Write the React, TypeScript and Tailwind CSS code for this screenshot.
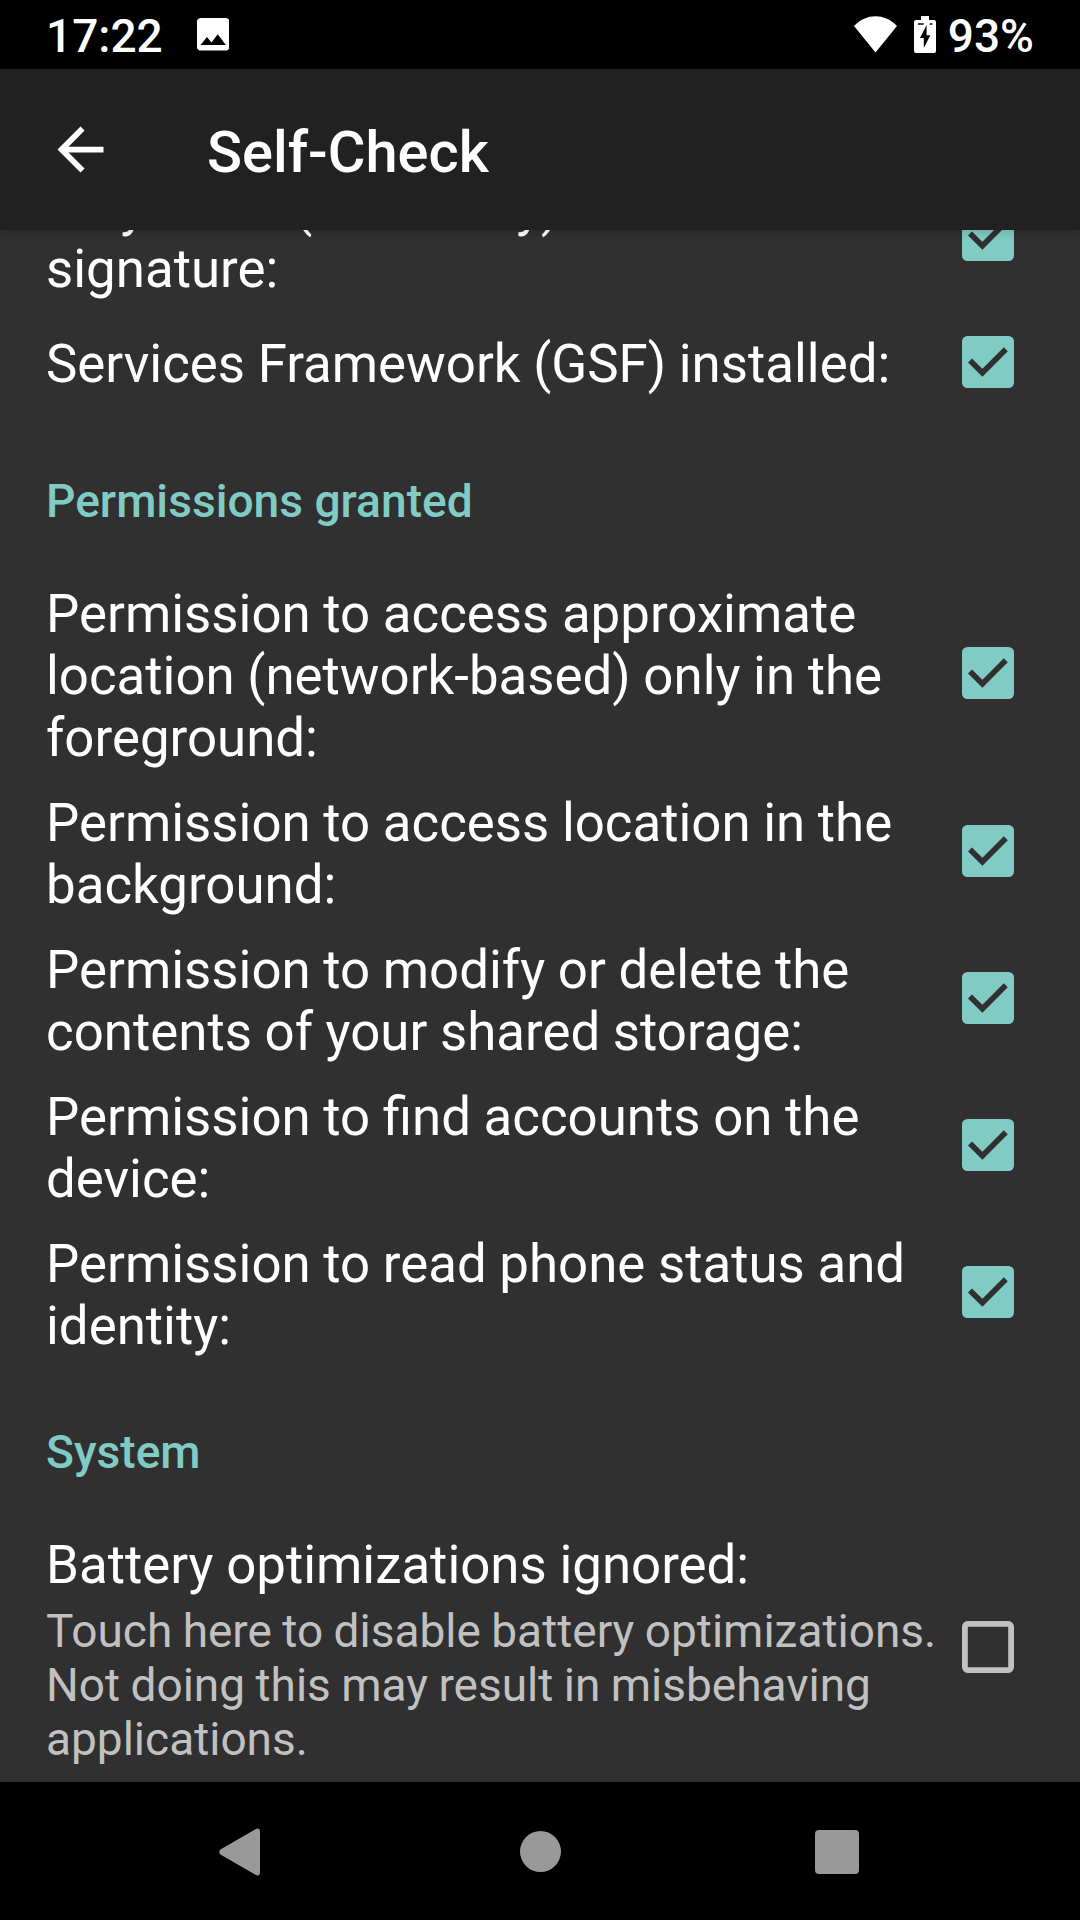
import type { ReactNode } from "react";

function Checkbox({ checked, className }: { checked: boolean; className: string }) {
  return (
    <svg viewBox="0 0 52 52" className={`h-[52px] w-[52px] shrink-0 ${className}`}>
      {checked ? (
        <>
          <rect width="52" height="52" rx="5.5" fill="#80cbc4" />
          <path d="M8 24.5 L20.4 36.8 L43.8 13.2" fill="none" stroke="#303030" strokeWidth="5.6" />
        </>
      ) : (
        <rect x="2.9" y="2.9" width="46.2" height="46.2" rx="2.8" fill="none" stroke="#c1c1c1" strokeWidth="5.8" />
      )}
    </svg>
  );
}

function CheckRow({
  title,
  summary,
  checked = true,
  padding = "pt-[14px] pb-[9px]",
  box = "mb-[6px]",
}: {
  title: string;
  summary?: string;
  checked?: boolean;
  padding?: string;
  box?: string;
}) {
  return (
    <div className={`flex items-center justify-between pr-[66px] pl-[46px] ${padding}`}>
      <div className="w-[900px]">
        <div className="text-[52.82px] leading-[62px] [word-spacing:-0.5px] text-white">{title}</div>
        {summary && (
          <div className="mt-2 text-[46px] leading-[54px] [word-spacing:-1px] text-[#c1c1c1]">{summary}</div>
        )}
      </div>
      <Checkbox checked={checked} className={box} />
    </div>
  );
}

function SectionHeader({ children }: { children: ReactNode }) {
  return (
    <h2 className="px-[46px] pt-[59px] pb-[41px] text-[46.15px] leading-[54px] font-medium text-[#80cbc4]">
      {children}
    </h2>
  );
}

function StatusBar() {
  return (
    <div className="flex h-[69px] shrink-0 items-start bg-black pr-[46px] pl-[46px] text-[46px] leading-[54px] font-medium text-white">
      <span className="mt-[9px]">17:22</span>
      <svg viewBox="3 3 18 18" className="mt-[18px] ml-[34px] h-[32.5px] w-[32.5px]" fill="#fff">
        <path d="M21 19V5c0-1.1-.9-2-2-2H5c-1.1 0-2 .9-2 2v14c0 1.1.9 2 2 2h14c1.1 0 2-.9 2-2zM8.5 13.5l2.5 3.01L14.5 12l4.5 6H5l3.5-4.5z" />
      </svg>
      <div className="ml-auto flex items-start">
        <svg viewBox="0 0 43 37" className="mt-4 h-[37px] w-[43px]" fill="#fff">
          <path d="M0 10 C6.2 3.6 13.6 0.3 21.5 0.3 C29.4 0.3 36.8 3.6 43 10 L21.5 36.4 Z" />
        </svg>
        <svg viewBox="0 0 22 37" className="mt-4 ml-[17px] h-[37px] w-[22px]">
          <path d="M7 0 H15 V4 H20 Q22 4 22 6 V35 Q22 37 20 37 H2 Q0 37 0 35 V6 Q0 4 2 4 H7 Z" fill="#fff" />
          <path d="M12.6 9 V19.3 H16.3 L9.8 32 V22 H6 Z M4 7.3 H9.7 V8.8 H4 Z M15.8 7.3 H18.4 V8.8 H15.8 Z" fill="#000" />
        </svg>
        <span className="mt-[9px] ml-[12px]">93%</span>
      </div>
    </div>
  );
}

function AppBar() {
  return (
    <header className="relative z-10 flex h-[161px] shrink-0 items-center bg-[#212121] pl-[46px] shadow-[0_3px_8px_rgba(0,0,0,0.14)]">
      <svg viewBox="0 0 24 24" className="h-[69px] w-[69px]" fill="#fff">
        <path d="M20 11H7.83l5.59-5.59L12 4l-8 8 8 8 1.41-1.41L7.83 13H20v-2z" />
      </svg>
      <h1 className="mt-[5px] ml-[92px] text-[57.8px] leading-[68px] font-medium text-white">Self-Check</h1>
    </header>
  );
}

function NavBar() {
  return (
    <nav className="flex h-[138px] shrink-0 items-center justify-between bg-black pt-px pr-[221px] pl-[219px]">
      <svg viewBox="0 0 41 48" className="h-[48px] w-[41px]" fill="#999">
        <path d="M1.4 21.6 L36.5 1.2 Q41 -0.8 41 4 V44 Q41 48.8 36.5 46.8 L1.4 26.4 Q-0.8 24 1.4 21.6 Z" />
      </svg>
      <div className="ml-[6px] h-[41px] w-[41px] rounded-full bg-[#999]" />
      <div className="h-[44px] w-[44px] rounded-[4px] bg-[#999]" />
    </nav>
  );
}

export default function App() {
  return (
    <div className="flex h-[1920px] w-[1080px] flex-col overflow-hidden bg-[#303030] font-['Roboto',sans-serif]">
      <StatusBar />
      <AppBar />
      <main className="h-[1552px] shrink-0 overflow-hidden">
        <div className="-mt-[68px]">
          <CheckRow title="Play Store (Phonesky) has correct signature:" />
          <CheckRow title="Services Framework (GSF) installed:" padding="pt-[24px] pb-[20px]" box="mb-[4px]" />
          <SectionHeader>Permissions granted</SectionHeader>
          <CheckRow title="Permission to access approximate location (network-based) only in the foreground:" />
          <CheckRow title="Permission to access location in the background:" />
          <CheckRow title="Permission to modify or delete the contents of your shared storage:" />
          <CheckRow title="Permission to find accounts on the device:" />
          <CheckRow title="Permission to read phone status and identity:" />
          <SectionHeader>System</SectionHeader>
          <CheckRow
            title="Battery optimizations ignored:"
            summary="Touch here to disable battery optimizations. Not doing this may result in misbehaving applications."
            checked={false}
          />
        </div>
      </main>
      <NavBar />
    </div>
  );
}
